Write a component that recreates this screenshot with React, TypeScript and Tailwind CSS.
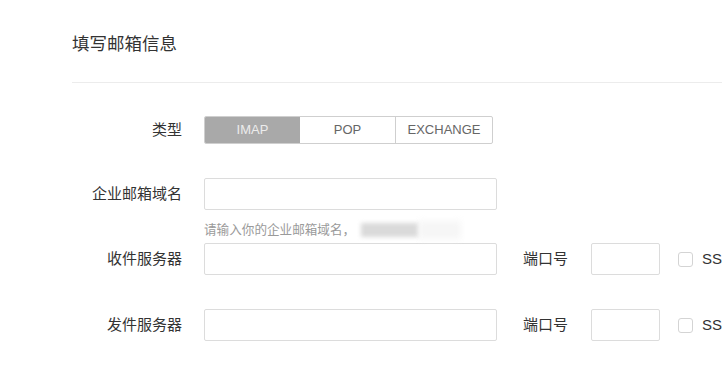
import React from "react";

const font = { fontFamily: '"Liberation Sans", "Noto Sans CJK SC", sans-serif' };

function Label({ children }: { children: React.ReactNode }) {
  return (
    <div className="w-[110px] shrink-0 text-right text-[15px] text-[#333] mr-[22px] whitespace-nowrap">
      {children}
    </div>
  );
}

function TextBox({ w }: { w: string }) {
  return <div className={`${w} h-[32px] shrink-0 rounded-[2px] border border-[#dcdcdc] bg-white`} />;
}

function PortAndSsl() {
  return (
    <>
      <div className="ml-[26px] shrink-0 whitespace-nowrap text-[15px] text-[#333]">端口号</div>
      <div className="ml-[23px] h-[32px] w-[69px] shrink-0 rounded-[2px] border border-[#dcdcdc] bg-white" />
      <div className="ml-[18px] h-[15px] w-[15px] shrink-0 rounded-[3px] border border-[#d4d4d4] bg-white" />
      <div className="ml-[9px] shrink-0 whitespace-nowrap text-[15px] text-[#333]">SSL</div>
    </>
  );
}

export default function App() {
  return (
    <div className="h-[379px] w-[722px] overflow-hidden bg-white" style={font}>
      <div className="ml-[72px]">
        <div className="pt-[32px] pb-[26px] border-b border-[#ececec] text-[17.5px] leading-[24px] text-[#333]">
          填写邮箱信息
        </div>

        <div className="mt-[33px] flex items-center">
          <Label>类型</Label>
          <div className="flex h-[28px] shrink-0 overflow-hidden rounded-[2px] border border-[#cfcfcf] text-[13px]">
            <div className="flex w-[95px] items-center justify-center bg-[#a9a9a9] text-[#ececec]">IMAP</div>
            <div className="flex w-[96px] items-center justify-center border-r border-[#cfcfcf] text-[#666]">POP</div>
            <div className="flex w-[96px] items-center justify-center text-[#666]">EXCHANGE</div>
          </div>
        </div>

        <div className="mt-[34px] flex items-center">
          <Label>企业邮箱域名</Label>
          <TextBox w="w-[293px]" />
        </div>

        <div className="mt-[11px] flex items-center pl-[132px] text-[12.6px] leading-[18px] text-[#9a9a9a]">
          <span className="whitespace-nowrap">请输入你的企业邮箱域名，</span>
          <span className="ml-[6px] inline-block h-[14px] w-[58px] shrink-0 bg-[#dadada] blur-[2px]" />
          <span className="inline-block h-[18px] w-[42px] shrink-0 bg-[#f6f6f6] blur-[3px]" />
        </div>

        <div className="mt-[4px] flex items-center">
          <Label>收件服务器</Label>
          <TextBox w="w-[293px]" />
          <PortAndSsl />
        </div>

        <div className="mt-[34px] flex items-center">
          <Label>发件服务器</Label>
          <TextBox w="w-[293px]" />
          <PortAndSsl />
        </div>
      </div>
    </div>
  );
}
